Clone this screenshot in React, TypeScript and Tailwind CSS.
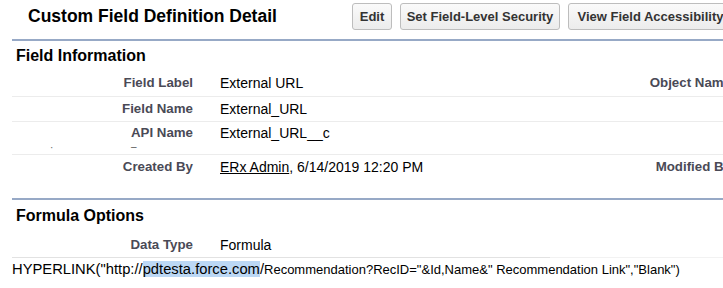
const labelCls =
  "w-[181px] shrink-0 text-right font-bold text-[13.3px] leading-[16px] text-[#4a4a56]";
const valueCls = "w-[447px] shrink-0 pl-[27px] text-[14px] leading-[16px] text-black";

function Button({ label, width }: { label: string; width: string }) {
  return (
    <div
      className={`${width} shrink-0 h-[27px] flex items-center justify-center whitespace-nowrap rounded-[3px] border border-[#bdbdbd] bg-gradient-to-b from-[#fafafa] to-[#ececec] text-[13px] font-bold text-[#333]`}
    >
      {label}
    </div>
  );
}

function Row({
  label,
  value,
  right,
  className,
}: {
  label: string;
  value: React.ReactNode;
  right?: string;
  className: string;
}) {
  return (
    <div className={`flex w-[900px] ${className}`}>
      <div className={labelCls}>{label}</div>
      <div className={valueCls}>{value}</div>
      <div className="w-[91px] shrink-0 text-right font-bold text-[13.3px] leading-[16px] text-[#4a4a56] whitespace-nowrap">
        {right}
      </div>
    </div>
  );
}

export default function App() {
  return (
    <div className="w-[723px] h-[288px] overflow-hidden bg-white font-['Liberation_Sans',Arial,sans-serif]">
      {/* page header */}
      <div className="flex items-center h-[33px] mb-[6px]">
        <div className="w-[352px] shrink-0 pl-[28px] text-[17.5px] font-bold text-black whitespace-nowrap">
          Custom Field Definition Detail
        </div>
        <div className="flex gap-[8px]">
          <Button label="Edit" width="w-[40px]" />
          <Button label="Set Field-Level Security" width="w-[160px]" />
          <Button label="View Field Accessibility" width="w-[165px]" />
        </div>
      </div>

      <div className="ml-[12px] h-[2px] bg-[#97a9c6]" />
      <div className="h-[29px] flex items-center pl-[16px] text-[16px] font-bold text-black">
        Field Information
      </div>

      <Row
        className="ml-[12px] h-[27px] items-center border-b border-[#ececec]"
        label="Field Label"
        value="External URL"
        right="Object Name"
      />
      <Row
        className="ml-[12px] h-[25px] items-center border-b border-[#ececec]"
        label="Field Name"
        value="External_URL"
      />
      <div className="relative ml-[12px] h-[33px] border-b border-[#ececec] pt-[3px]">
        <Row className="items-start" label="API Name" value="External_URL__c" />
        <span className="absolute left-[38px] top-[18px] text-[10px] text-[#666]">·</span>
        <span className="absolute left-[119px] top-[20px] text-[10px] leading-[10px] text-[#555]">–</span>
      </div>
      <div className="ml-[12px] h-[43px] pt-[4px]">
        <Row
          className="items-start"
          label="Created By"
          value={
            <span>
              <span className="underline">ERx Admin</span>, 6/14/2019 12:20 PM
            </span>
          }
          right="Modified By"
        />
      </div>

      <div className="ml-[12px] h-[2px] bg-[#97a9c6]" />
      <div className="h-[32px] flex items-center pl-[16px] text-[16px] font-bold text-black">
        Formula Options
      </div>
      <div className="ml-[12px] h-[25px] flex items-center">
        <div className={labelCls}>Data Type</div>
        <div className={valueCls}>Formula</div>
      </div>
      <div className="ml-[12px] flex h-[1px]">
        <div className="w-[538px] bg-[#e2e2e2]" />
        <div className="flex-1 bg-[#f2f2f2]" />
      </div>
      <div className="pl-[12px] pt-[2px] whitespace-nowrap text-black leading-[17px]">
        <span className="text-[14.75px]">
          HYPERLINK("http://<span className="bg-[#bcd8f5]">pdtesta.force.com</span>/
        </span>
        <span className="text-[13px]">
          Recommendation?RecID="&amp;Id,Name&amp;" Recommendation Link","Blank")
        </span>
      </div>
    </div>
  );
}
